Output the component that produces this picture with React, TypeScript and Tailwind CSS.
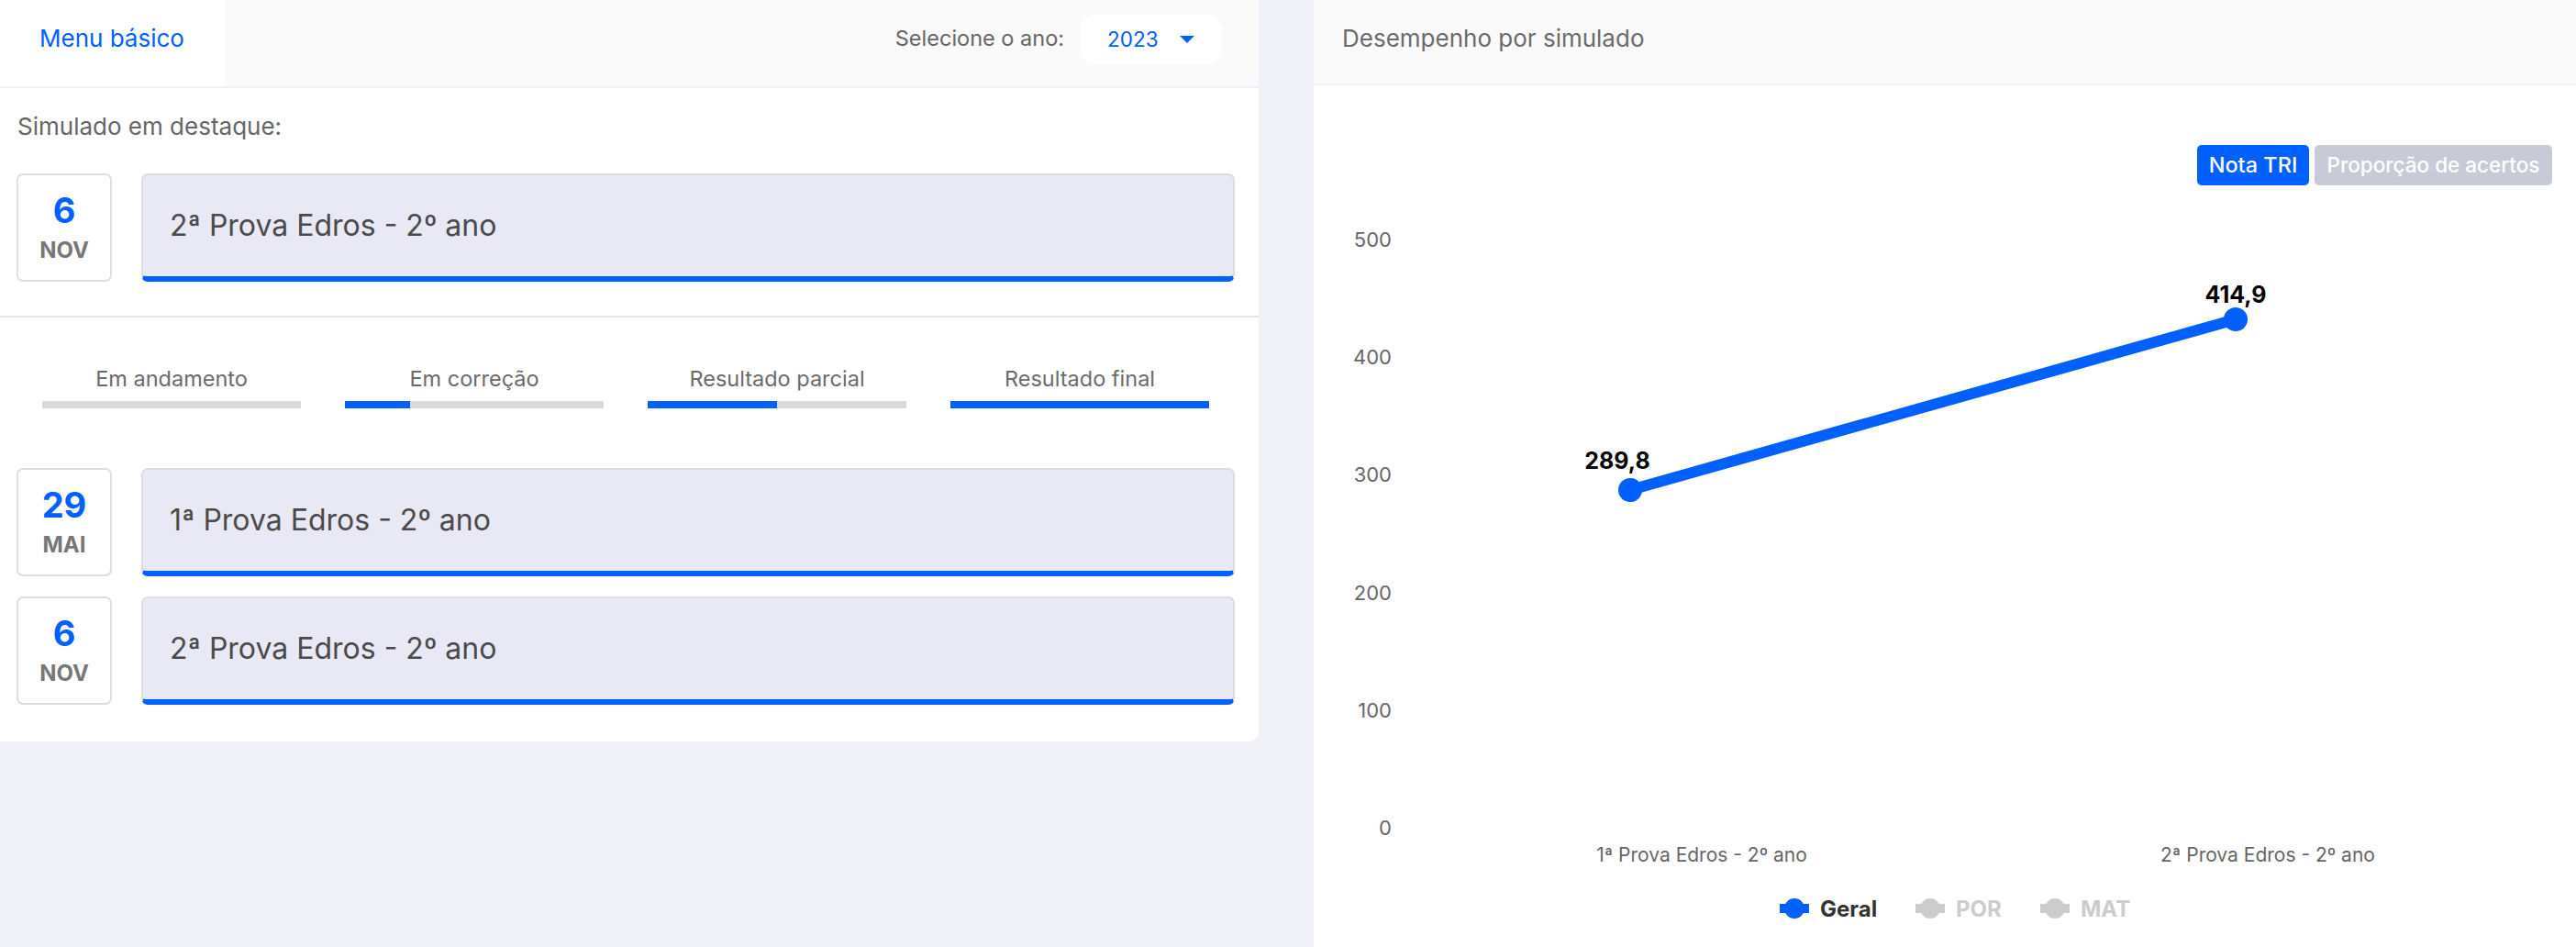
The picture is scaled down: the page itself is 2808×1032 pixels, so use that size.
import React from 'react';

const BLUE = '#0060fe';

const featured = { day: '6', month: 'NOV', title: '2ª Prova Edros - 2º ano' };

const steps = [
  { label: 'Em andamento', pct: 0 },
  { label: 'Em correção', pct: 25 },
  { label: 'Resultado parcial', pct: 50 },
  { label: 'Resultado final', pct: 100 },
];

const exams = [
  { day: '29', month: 'MAI', title: '1ª Prova Edros - 2º ano' },
  { day: '6', month: 'NOV', title: '2ª Prova Edros - 2º ano' },
];

const ExamRow = ({ day, month, title }: { day: string; month: string; title: string }) => (
  <div className="flex gap-[32px] pl-[18px] pr-[26px]">
    <div className="w-[104px] h-[118px] shrink-0 rounded-[7px] border-2 border-[#dedede] bg-white flex flex-col items-center justify-center gap-[10px]">
      <span className="text-[38px] leading-[40px] font-bold text-[#0060fe]">{day}</span>
      <span className="text-[24px] leading-[28px] font-bold text-[#777777]">{month}</span>
    </div>
    <div className="flex-1 h-[118px] rounded-[7px] border-2 border-b-[6px] border-[#dcdce2] border-b-[#0060fe] bg-[#e9e8f5] flex items-center pl-[29px]">
      <span className="text-[32px] text-[#4a4a4a]">{title}</span>
    </div>
  </div>
);

const yTicks = [500, 400, 300, 200, 100, 0];

const LegendItem = ({ x, color, label, textColor }: { x: number; color: string; label: string; textColor: string }) => (
  <g>
    <rect x={x - 16} y={783} width={32} height={10} fill={color} />
    <circle cx={x} cy={788} r={11} fill={color} />
    <text x={x + 28} y={788} dominantBaseline="central" fontSize={24} fontWeight={700} fill={textColor}>
      {label}
    </text>
  </g>
);

const Chart = () => (
  <svg width={1376} height={830} className="block">
    {yTicks.map((v) => (
      <text key={v} x={85} y={700 - v * 1.282} textAnchor="end" dominantBaseline="central" fontSize={22} fill="#666666">
        {v}
      </text>
    ))}
    <line x1={345} y1={332} x2={1005} y2={146} stroke={BLUE} strokeWidth={12} strokeLinecap="round" />
    <circle cx={345} cy={332} r={13} fill={BLUE} />
    <circle cx={1005} cy={146} r={13} fill={BLUE} />
    <text x={331} y={309} textAnchor="middle" fontSize={25} fontWeight={700} fill="#000000">289,8</text>
    <text x={1005} y={128} textAnchor="middle" fontSize={25} fontWeight={700} fill="#000000">414,9</text>
    <text x={423} y={729} textAnchor="middle" dominantBaseline="central" fontSize={21} fill="#666666">1ª Prova Edros - 2º ano</text>
    <text x={1040} y={729} textAnchor="middle" dominantBaseline="central" fontSize={21} fill="#666666">2ª Prova Edros - 2º ano</text>
    <LegendItem x={524} color={BLUE} label="Geral" textColor="#333333" />
    <LegendItem x={672} color="#cccccc" label="POR" textColor="#cccccc" />
    <LegendItem x={808} color="#cccccc" label="MAT" textColor="#cccccc" />
  </svg>
);

export default function App() {
  return (
    <div className="w-[2808px] min-h-[1032px] bg-[#f1f2f7] flex items-start gap-[60px] font-['Inter',sans-serif]">
      {/* painel esquerdo */}
      <section className="w-[1372px] shrink-0 bg-white rounded-br-[10px] pb-[40px]">
        <header className="h-[96px] flex bg-[#fafafa] border-b-2 border-[#f0f0f5]">
          <div className="w-[245px] bg-white flex items-center pl-[43px] pb-[12px]">
            <span className="text-[26px] text-[#0060fe]">Menu básico</span>
          </div>
          <div className="flex-1 flex items-center justify-end gap-[17px] pr-[40px] pb-[8px]">
            <span className="text-[23.5px] text-[#666666] pb-[3px]">Selecione o ano:</span>
            <div className="w-[155px] h-[54px] rounded-[17px] bg-white flex items-center justify-between pl-[30px] pr-[30px]">
              <span className="text-[22.5px] text-[#0060fe]">2023</span>
              <span className="w-0 h-0 border-l-[8px] border-r-[8px] border-t-[8px] border-l-transparent border-r-transparent border-t-[#0060fe]" />
            </div>
          </div>
        </header>

        <p className="pt-[26px] pl-[19px] text-[26px] leading-[32px] text-[#666666]">Simulado em destaque:</p>
        <div className="mt-[35px]">
          <ExamRow {...featured} />
        </div>

        <div className="mt-[37px] h-[2px] bg-[#e3e3e3]" />

        <div className="grid grid-cols-4 gap-[48px] pl-[46px] pr-[54px] pt-[52px]">
          {steps.map((s) => (
            <div key={s.label} className="flex flex-col items-center">
              <span className="text-[23.5px] leading-[30px] text-[#6b6b6b]">{s.label}</span>
              <div className="mt-[9px] w-full h-[8px] bg-[#d9d9d9]">
                <div className="h-full bg-[#0060fe]" style={{ width: `${s.pct}%` }} />
              </div>
            </div>
          ))}
        </div>

        <div className="mt-[65px] flex flex-col gap-[22px]">
          {exams.map((e) => (
            <ExamRow key={e.title} {...e} />
          ))}
        </div>
      </section>

      {/* painel direito */}
      <section className="flex-1 h-[1032px] bg-white flex flex-col">
        <header className="h-[93px] shrink-0 bg-[#fafafa] border-b-2 border-[#f0f0f5] flex items-center pl-[31px] pb-[8px]">
          <span className="text-[26px] text-[#6b6b6b]">Desempenho por simulado</span>
        </header>
        <div className="flex justify-end gap-[6px] pr-[26px] mt-[65px]">
          <button className="w-[122px] h-[44px] rounded-[5px] bg-[#0060fe] text-white text-[23.5px] font-medium">Nota TRI</button>
          <button className="w-[259px] h-[44px] rounded-[5px] bg-[#c8cbd5] text-white text-[22.5px] font-medium">Proporção de acertos</button>
        </div>
        <Chart />
      </section>
    </div>
  );
}
